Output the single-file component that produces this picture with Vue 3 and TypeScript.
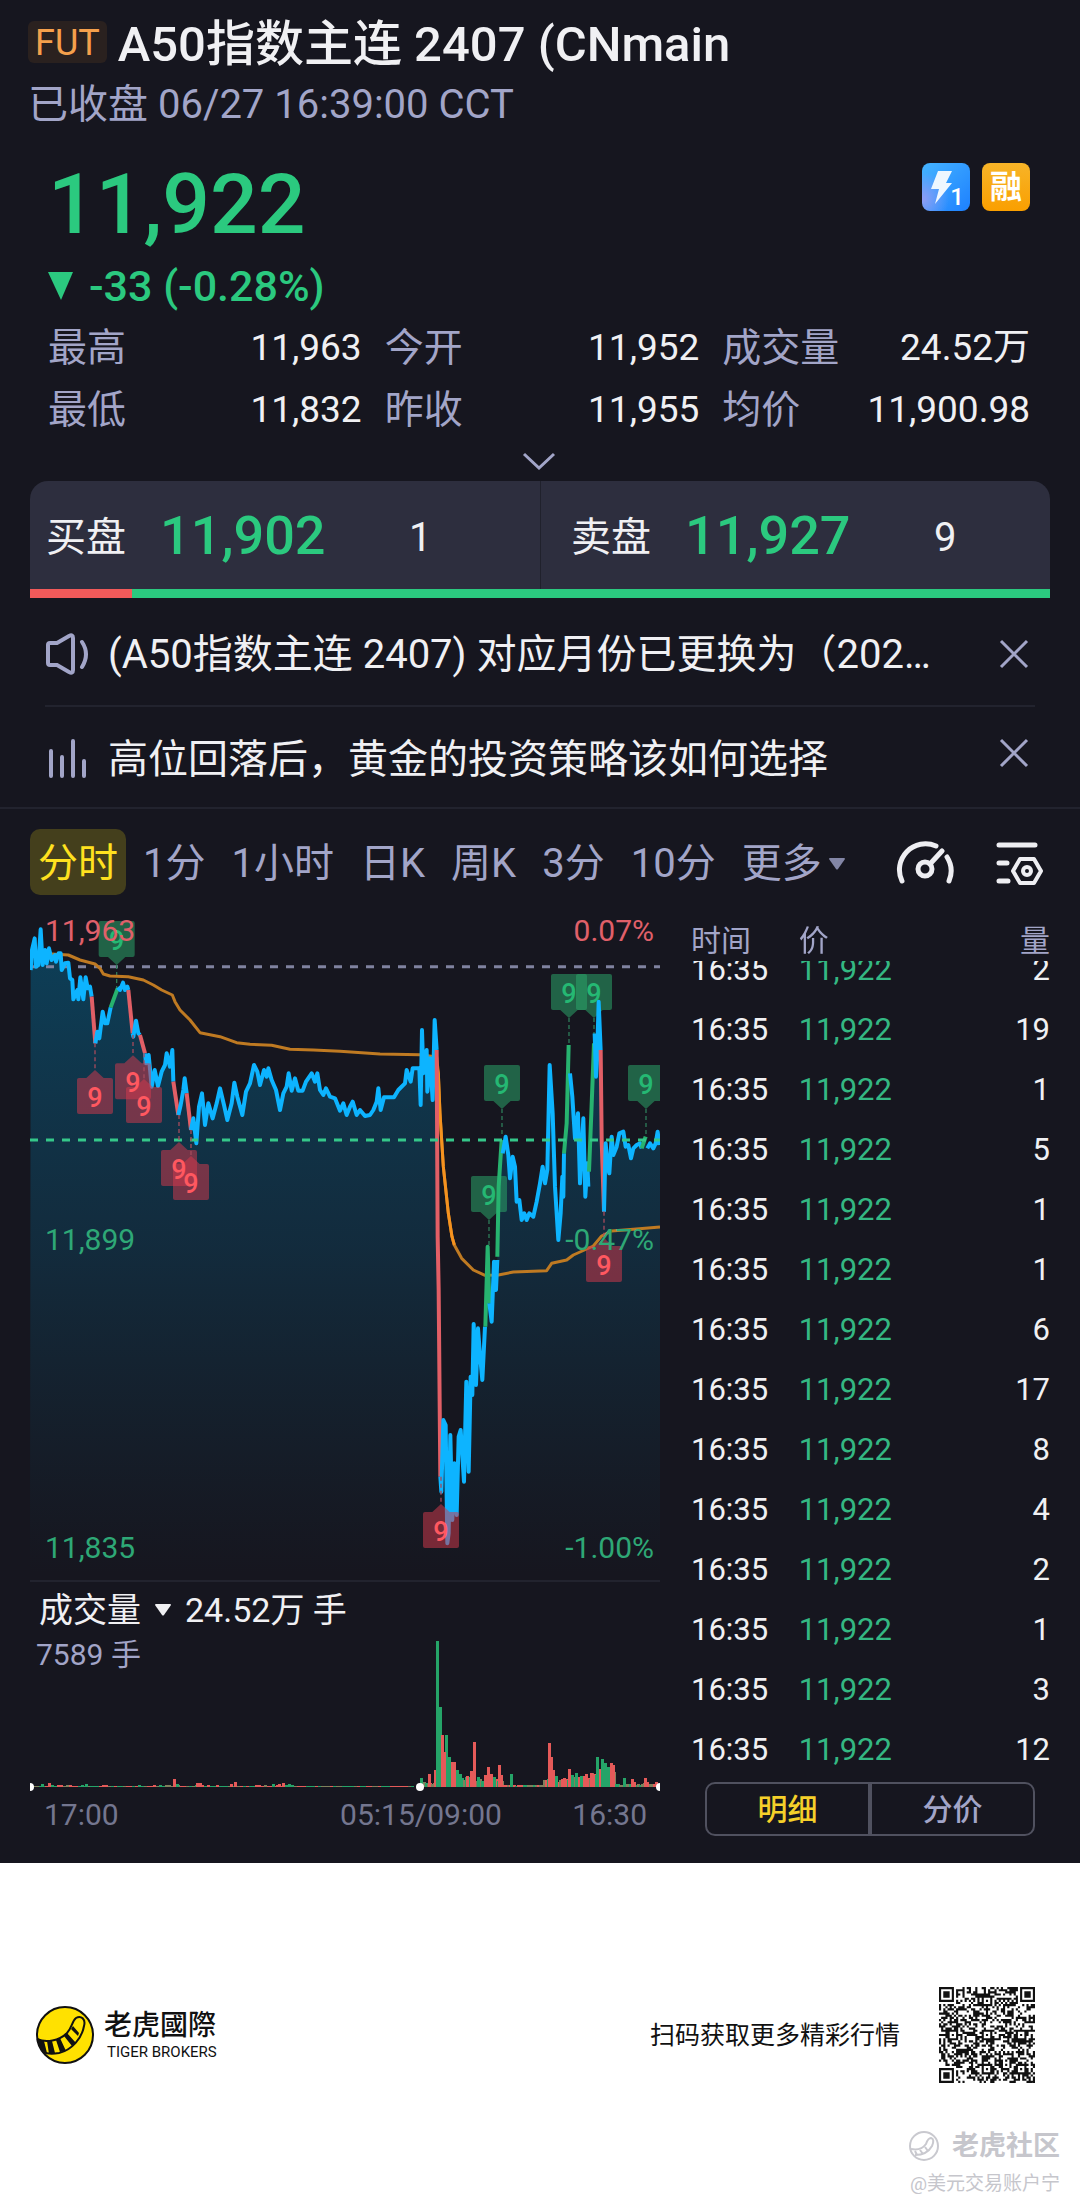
<script setup lang="ts">
import { onMounted, ref } from 'vue'

type Point = [number, number]
type Trend = 'up' | 'down'

interface Segment { kind: 'flat' | 'rise' | 'fall'; points: string }
interface Marker { x: number; top: number; trend: Trend; leadFrom: number; leadTo: number }
interface Bar { x: number; h: number; c: 'r' | 'g' | 'm' }

const stats = [
  { label: '最高', value: '11,963' },
  { label: '今开', value: '11,952' },
  { label: '成交量', value: '24.52万' },
  { label: '最低', value: '11,832' },
  { label: '昨收', value: '11,955' },
  { label: '均价', value: '11,900.98' },
]

const quotes = [
  { label: '买盘', price: '11,902', size: '1' },
  { label: '卖盘', price: '11,927', size: '9' },
]

const periods = ['分时', '1分', '1小时', '日K', '周K', '3分', '10分']
const activePeriod = ref('分时')

const ticks = [2, 19, 1, 5, 1, 1, 6, 17, 8, 4, 2, 1, 3, 12]
const tickView = ref('明细')
const tickScroller = ref<HTMLElement | null>(null)

onMounted(() => {
  if (tickScroller.value) tickScroller.value.scrollTop = tickScroller.value.scrollHeight
})

// Price series, three plot units to one screen pixel.
const segments: Segment[] = [
  { kind: 'flat', points: '32,210 36,150 44,115 48,200 55,195 62,88 68,195 75,150 80,190 87,145 95,180 105,165 108,185 116,160 122,160 125,210 135,190 145,188 150,235 157,240 160,298 172,270 175,298 181,232 190,298 197,232 203,265 210,260 215,290' },
  { kind: 'fall', points: '215,290 226,430' },
  { kind: 'flat', points: '226,430 232,395 238,415 248,335 255,370 262,370 272,322' },
  { kind: 'rise', points: '272,322 293,265' },
  { kind: 'flat', points: '293,262 300,270 309,248 315,270 322,260 325,270' },
  { kind: 'fall', points: '325,270 338,400' },
  { kind: 'flat', points: '338,400 340,410 348,362 355,400 360,405' },
  { kind: 'fall', points: '360,405 375,460' },
  { kind: 'flat', points: '375,460 378,490 386,465 395,560 404,510 414,558 425,515 435,495 440,460 450,500 457,450 460,545' },
  { kind: 'fall', points: '460,545 475,645' },
  { kind: 'flat', points: '475,645 482,615 490,570 494,535 500,580' },
  { kind: 'fall', points: '500,580 513,690' },
  { kind: 'flat', points: '513,690 520,655 529,730 537,620 546,580 555,675 565,610 578,655 590,610 600,565 612,615 622,660 635,610 643,548 652,590 667,645 678,575 690,550 702,495 712,515 720,555 732,510 740,530 745,505 755,540 768,570 780,630 790,580 800,560 806,520 815,572 825,535 835,572 848,572 858,545 875,520 885,545 892,520 900,570 910,585 918,565 930,590 945,595 960,632 970,610 980,645 990,620 998,605 1010,645 1020,630 1035,648 1050,645 1060,630 1070,605 1075,565 1082,630 1092,592 1122,592 1135,570 1155,550 1160,510 1172,545 1178,505 1190,505 1198,505 1202,615 1206,390 1210,520 1220,450 1222,575 1230,475 1238,600 1244,360 1250,450' },
  { kind: 'fall', points: '1250,450 1253,1010 1256,1170 1261,1730' },
  { kind: 'flat', points: '1261,1730 1264,1775 1270,1560 1277,1575 1282,1930 1286,1900 1291,1605 1297,1860 1303,1690 1310,1845 1316,1610 1322,1590 1332,1745 1339,1445 1346,1715 1352,1430 1357,1485 1361,1272 1368,1455 1374,1285 1380,1365 1387,1440 1395,1280' },
  { kind: 'rise', points: '1396,1280 1403,1040 1408,1210' },
  { kind: 'flat', points: '1408,1210 1415,1265 1422,1085 1428,1170 1432,1080' },
  { kind: 'rise', points: '1432,1070 1436,860 1445,720' },
  { kind: 'flat', points: '1448,760 1457,710 1465,765 1470,835 1478,770 1485,800 1490,905 1498,900 1505,960 1513,940 1520,960 1528,940 1540,950 1550,905 1560,850 1568,800 1575,850 1582,810 1589,495 1598,640 1605,860 1615,1020 1622,940 1627,830 1630,890 1632,760' },
  { kind: 'rise', points: '1632,760 1640,670 1646,435' },
  { kind: 'flat', points: '1650,520 1657,590 1665,715 1674,640 1680,850 1690,655 1696,890 1702,790 1705,860' },
  { kind: 'rise', points: '1707,815 1714,640 1722,430' },
  { kind: 'flat', points: '1724,400 1728,530 1731,480 1736,305 1742,450' },
  { kind: 'fall', points: '1742,450 1745,720 1752,935' },
  { kind: 'flat', points: '1752,935 1757,730 1763,800 1768,820 1775,710 1780,765 1790,740 1798,700 1810,695 1817,740 1825,735 1833,775 1840,745 1850,735 1860,730 1865,745' },
  { kind: 'rise', points: '1865,745 1877,710' },
  { kind: 'flat', points: '1882,745 1890,730 1900,745 1907,730 1913,695 1918,735' },
]
const area = `30,2020 ${segments.map((s) => s.points).join(' ')} 1920,735 1920,2020`

const average =
  '95,162 145,165 180,180 225,192 240,205 250,222 270,228 325,230 370,240 400,255 425,270 457,285 465,305 480,330 510,360 540,398 600,410 650,428 690,433 755,436 810,448 880,450 960,454 1080,462 1200,464 1245,470 1255,520 1260,640 1270,800 1285,940 1296,1010 1303,1035 1325,1075 1360,1110 1395,1126 1435,1125 1480,1116 1580,1112 1595,1090 1640,1080 1660,1065 1720,1038 1745,1008 1775,993 1840,988 1920,981'

const markers: Marker[] = [
  { x: 290, top: 63, trend: 'up', leadFrom: 195, leadTo: 265 },
  { x: 1446, top: 495, trend: 'up', leadFrom: 627, leadTo: 710 },
  { x: 1407, top: 828, trend: 'up', leadFrom: 960, leadTo: 1040 },
  { x: 1647, top: 222, trend: 'up', leadFrom: 354, leadTo: 435 },
  { x: 1722, top: 222, trend: 'up', leadFrom: 354, leadTo: 435 },
  { x: 1878, top: 495, trend: 'up', leadFrom: 627, leadTo: 710 },
  { x: 225, top: 534, trend: 'down', leadFrom: 430, leadTo: 510 },
  { x: 339, top: 490, trend: 'down', leadFrom: 405, leadTo: 466 },
  { x: 372, top: 561, trend: 'down', leadFrom: 460, leadTo: 537 },
  { x: 477, top: 750, trend: 'down', leadFrom: 645, leadTo: 726 },
  { x: 513, top: 792, trend: 'down', leadFrom: 690, leadTo: 768 },
  { x: 1263, top: 1836, trend: 'down', leadFrom: 1730, leadTo: 1812 },
  { x: 1752, top: 1038, trend: 'down', leadFrom: 935, leadTo: 1014 },
]
const upMarkers = markers.filter((m) => m.trend === 'up')
const downMarkers = markers.filter((m) => m.trend === 'down')

function markerShape(m: Marker): string {
  const l = m.x - 54
  const r = m.x + 54
  const t = m.top
  const b = m.top + 108
  return m.trend === 'up'
    ? `M${l + 6} ${t}H${r - 6}Q${r} ${t} ${r} ${t + 6}V${b - 6}Q${r} ${b} ${r - 6} ${b}H${m.x + 26}L${m.x} ${b + 24}L${m.x - 26} ${b}H${l + 6}Q${l} ${b} ${l} ${b - 6}V${t + 6}Q${l} ${t} ${l + 6} ${t}Z`
    : `M${l + 6} ${t}H${m.x - 26}L${m.x} ${t - 24}L${m.x + 26} ${t}H${r - 6}Q${r} ${t} ${r} ${t + 6}V${b - 6}Q${r} ${b} ${r - 6} ${b}H${l + 6}Q${l} ${b} ${l} ${b - 6}V${t + 6}Q${l} ${t} ${l + 6} ${t}Z`
}

function sequence(seed: number): () => number {
  let s = seed
  return () => {
    s = (s * 1103515245 + 12345) % 2147483648
    return s / 2147483648
  }
}

// Traded volume: quiet overnight session, then the named day-session bars.
const next = sequence(7)
const quiet: Bar[] = Array.from({ length: 128 }, (_, i): Bar => ({
  x: i * 3,
  h: i > 90 ? 1 : 1 + Math.floor(next() * 1.5),
  c: next() < 0.4 ? 'r' : next() < 0.6 ? 'g' : 'm',
}))
const busy: Bar[] = Array.from({ length: 116 }, (_, i): Bar => {
  const x = 393 + i * 2
  let h = 3
  if (x < 404) h = 4
  else if (x < 412) h = 22
  else if (x < 424) h = 22 - (x - 412)
  else if (x < 472) h = 8
  else if (x < 512) h = 2
  else if (x < 532) h = 7
  else if (x < 560) h = 9
  else if (x < 584) h = 14
  return { x, h: Math.max(1, Math.round(h * (0.7 + next() * 0.5))), c: next() < 0.35 ? 'r' : next() < 0.4 ? 'g' : 'm' }
})
const named: [number, number, Bar['c']][] = [
  [11, 3, 'g'], [18, 4, 'r'], [55, 3, 'g'], [72, 2, 'r'], [143, 8, 'r'], [146, 3, 'g'], [166, 4, 'r'], [169, 4, 'r'], [200, 3, 'r'], [204, 5, 'r'],
  [242, 3, 'g'], [248, 3, 'r'], [252, 4, 'r'], [258, 3, 'g'], [390, 9, 'g'], [398, 13, 'r'], [404, 17, 'r'], [409, 80, 'g'], [411, 52, 'r'], [406, 146, 'g'],
  [415, 52, 'g'], [413, 35, 'r'], [418, 30, 'g'], [421, 25, 'r'], [423, 25, 'r'], [426, 17, 'g'], [429, 13, 'g'], [436, 11, 'r'],
  [440, 16, 'r'], [443, 45, 'r'], [447, 10, 'g'], [454, 12, 'r'], [457, 20, 'r'], [460, 13, 'r'], [463, 10, 'g'], [468, 22, 'r'],
  [470, 12, 'r'], [480, 13, 'g'], [520, 30, 'r'], [518, 44, 'r'], [522, 17, 'r'], [525, 11, 'g'], [533, 9, 'r'], [538, 18, 'r'],
  [541, 12, 'g'], [545, 14, 'g'], [550, 11, 'g'], [555, 13, 'r'], [560, 14, 'r'], [566, 30, 'g'], [569, 18, 'r'], [571, 28, 'g'],
  [574, 24, 'g'], [577, 20, 'g'], [580, 24, 'r'], [582, 22, 'r'], [593, 9, 'g'], [601, 8, 'r'], [603, 5, 'r'], [614, 9, 'r'],
  [616, 5, 'r'], [625, 5, 'r'],
]
const bars: Bar[] = [...quiet, ...busy, ...named.map(([x, h, c]): Bar => ({ x, h, c }))]

// 45-module code with finder, alignment and timing patterns.
const SIZE = 45
function qrPath(): string {
  const rnd = sequence(2407)
  const ring = (x: number, y: number, c: Point, half: number): number | null => {
    const d = Math.max(Math.abs(x - c[0]), Math.abs(y - c[1]))
    return d <= half ? d : null
  }
  const finders: Point[] = [[3, 3], [SIZE - 4, 3], [3, SIZE - 4]]
  const aligns: Point[] = [[22, 6], [6, 22], [22, 22], [38, 22], [22, 38], [38, 38]]
  let d = ''
  for (let y = 0; y < SIZE; y++) {
    for (let x = 0; x < SIZE; x++) {
      let on = rnd() < 0.5
      if (x === 6) on = y % 2 === 0
      if (y === 6) on = x % 2 === 0
      for (const c of aligns) {
        const r = ring(x, y, c, 2)
        if (r !== null) on = r !== 1
      }
      for (const c of finders) {
        const r = ring(x, y, c, 4)
        if (r !== null) on = r !== 4 && r !== 2
      }
      if (on) d += `M${x} ${y}h1v1h-1z`
    }
  }
  return d
}
const qr = qrPath()
</script>

<template>
  <div class="page">
    <main class="quote">
      <header class="head">
        <div class="title-row">
          <span class="fut">FUT</span>
          <h1>A50指数主连 2407 (CNmain</h1>
        </div>
        <p class="status">已收盘 06/27 16:39:00 CCT</p>
      </header>

      <section class="summary">
        <div class="price-row">
          <strong class="price">11,922</strong>
          <div class="badges">
            <span class="badge badge-blue">
              <svg viewBox="0 0 48 48" width="48" height="48" aria-hidden="true">
                <path d="M16 8H30L24 20H30L13 41L17 26H9Z" fill="#eef7ff" />
              </svg>
              <b>1</b>
            </span>
            <span class="badge badge-gold">融</span>
          </div>
        </div>
        <p class="change">
          <svg viewBox="0 0 25 28" width="25" height="28" aria-hidden="true"><path d="M0 0H25L13 28Z" fill="currentColor" /></svg>
          <span>-33 (-0.28%)</span>
        </p>
        <dl class="stats">
          <div v-for="s in stats" :key="s.label">
            <dt>{{ s.label }}</dt>
            <dd>{{ s.value }}</dd>
          </div>
        </dl>
        <button class="expand" type="button" aria-label="展开">
          <svg viewBox="0 0 34 18" width="34" height="18"><path d="M2 2L17 16L32 2" fill="none" stroke="currentColor" stroke-width="3" /></svg>
        </button>
      </section>

      <section class="book">
        <div v-for="q in quotes" :key="q.label" class="side">
          <span class="side-label">{{ q.label }}</span>
          <span class="side-price">{{ q.price }}</span>
          <span class="side-size">{{ q.size }}</span>
        </div>
        <div class="ratio"><i></i></div>
      </section>

      <section class="notices">
        <div class="notice">
          <svg class="notice-icon" viewBox="0 0 44 42" width="44" height="42" aria-hidden="true">
            <path d="M3 12Q3 10 5 10H12L24 3Q28 1 28 5V37Q28 41 24 39L12 32H5Q3 32 3 30Z M37 9Q45 21 37 34" fill="none" stroke="currentColor" stroke-width="4" stroke-linecap="round" />
          </svg>
          <p>(A50指数主连 2407) 对应月份已更换为（202…</p>
          <button class="close" type="button" aria-label="关闭">
            <svg viewBox="0 0 30 30" width="30" height="30"><path d="M2 2L28 28M28 2L2 28" fill="none" stroke="currentColor" stroke-width="3" /></svg>
          </button>
        </div>
        <div class="notice news">
          <svg class="notice-icon" viewBox="0 0 44 42" width="44" height="42" aria-hidden="true">
            <path d="M6 13V38M17 19V38M28 3V38M39 23V38" fill="none" stroke="currentColor" stroke-width="4" stroke-linecap="round" />
          </svg>
          <p>高位回落后，黄金的投资策略该如何选择</p>
          <button class="close" type="button" aria-label="关闭">
            <svg viewBox="0 0 30 30" width="30" height="30"><path d="M2 2L28 28M28 2L2 28" fill="none" stroke="currentColor" stroke-width="3" /></svg>
          </button>
        </div>
      </section>

      <nav class="periods">
        <div class="period-list">
          <button v-for="p in periods" :key="p" type="button" :class="{ active: p === activePeriod }" @click="activePeriod = p">{{ p }}</button>
          <button type="button">更多<svg class="more" viewBox="0 0 18 12" width="18" height="12" aria-hidden="true"><path d="M1 1Q1 0 2 0H16Q17 0 17 1L10 11Q9 12 8 11Z" fill="#8386a6" /></svg></button>
        </div>
        <button class="tool" type="button" aria-label="指标">
          <svg viewBox="0 0 60 48" width="60" height="48">
            <g fill="none" stroke="#eeeef2" stroke-width="5" stroke-linecap="round">
              <path d="M7 43A26 26 0 0 1 41 8M52 19A26 26 0 0 1 54 43M35 26L47 13" />
              <circle cx="30" cy="31" r="7" />
            </g>
          </svg>
        </button>
        <button class="tool" type="button" aria-label="设置">
          <svg viewBox="0 0 50 48" width="50" height="48">
            <g fill="none" stroke="#eeeef2" stroke-width="5" stroke-linecap="round">
              <path d="M4 7H40M4 25H12M4 43H13" />
              <path d="M25 21H39L46 33L39 45H25L18 33Z" stroke-width="4" stroke-linejoin="round" />
              <circle cx="32" cy="33" r="4" stroke-width="4" />
            </g>
          </svg>
        </button>
      </nav>

      <div class="market">
        <section class="charts">
          <svg class="plot" viewBox="0 0 630 670" role="img" aria-label="分时">
            <defs>
              <linearGradient id="fade" x1="0" y1="0" x2="0" y2="1">
                <stop offset="0" stop-color="#0b4763" stop-opacity="0.85" />
                <stop offset="0.5" stop-color="#0f405a" stop-opacity="0.5" />
                <stop offset="1" stop-color="#12384c" stop-opacity="0" />
              </linearGradient>
            </defs>
            <g transform="translate(-10 -10) scale(0.33333)" fill="none">
              <polygon :points="area" fill="url(#fade)" />
              <path d="M30 200H1920" stroke="#8083a0" stroke-width="9" stroke-dasharray="24 24" />
              <g v-for="m in upMarkers" :key="m.x">
                <path :d="`M${m.x} ${m.leadFrom}V${m.leadTo}`" stroke="#2d7a58" stroke-width="4" stroke-dasharray="12 9" />
                <path :d="markerShape(m)" fill="#2ba468" fill-opacity="0.55" />
              </g>
            </g>
            <g class="nine nine-up">
              <text v-for="m in upMarkers" :key="m.x" :x="m.x / 3 - 10" :y="m.top / 3 + 19">9</text>
            </g>
            <g transform="translate(-10 -10) scale(0.33333)" fill="none" stroke-linejoin="round">
              <polyline :points="average" stroke="#bf7a22" stroke-width="9" />
              <path d="M1250 470L1255 520L1260 640L1270 800L1285 940L1296 1010L1303 1035" stroke="#f5921f" stroke-width="9" />
              <polyline v-for="(s, i) in segments" :key="i" :points="s.points" :class="s.kind" />
              <path d="M30 720H1920" stroke="#35c78a" stroke-width="9" stroke-dasharray="24 24" />
              <g v-for="m in downMarkers" :key="m.x">
                <path :d="`M${m.x} ${m.leadFrom}V${m.leadTo}`" stroke="#a34a5c" stroke-width="4" stroke-dasharray="12 9" />
                <path :d="markerShape(m)" fill="#d23a4c" fill-opacity="0.52" />
              </g>
            </g>
            <g class="nine nine-down">
              <text v-for="m in downMarkers" :key="m.x" :x="m.x / 3 - 10" :y="m.top / 3 + 19">9</text>
            </g>
            <g class="scale">
              <text class="red" x="15" y="31">11,963</text>
              <text x="15" y="340">11,899</text>
              <text x="15" y="648">11,835</text>
              <text class="red end" x="624" y="31">0.07%</text>
              <text class="end" x="624" y="340">-0.47%</text>
              <text class="end" x="624" y="648">-1.00%</text>
            </g>
          </svg>

          <button class="volume-head" type="button">
            <span>成交量</span>
            <svg viewBox="0 0 18 12" width="18" height="12" aria-hidden="true"><path d="M1 1Q1 0 2 0H16Q17 0 17 1L10 11Q9 12 8 11Z" fill="currentColor" /></svg>
            <span>24.52万 手</span>
          </button>
          <svg class="plot" viewBox="0 0 630 197" role="img" aria-label="成交量">
            <g shape-rendering="crispEdges">
              <rect v-for="(b, i) in bars" :key="i" :x="b.x" :y="149 - b.h" width="3" :height="b.h" :class="`bar-${b.c}`" />
            </g>
            <g fill="#fff">
              <circle cx="0" cy="149" r="4" />
              <circle cx="390" cy="149" r="4" />
              <circle cx="630" cy="149" r="4" />
            </g>
            <text class="peak" x="6" y="27">7589 手</text>
            <g class="times">
              <text x="14" y="187">17:00</text>
              <text class="mid" x="391" y="187">05:15/09:00</text>
              <text class="end" x="617" y="187">16:30</text>
            </g>
          </svg>
        </section>

        <section class="ticks">
          <div ref="tickScroller" class="tick-scroll">
            <table>
              <thead>
                <tr><th>时间</th><th>价</th><th>量</th></tr>
              </thead>
              <tbody>
                <tr v-for="(t, i) in ticks" :key="i"><td>16:35</td><td>11,922</td><td>{{ t }}</td></tr>
              </tbody>
            </table>
          </div>
          <div class="switch">
            <button type="button" :class="{ active: tickView === '明细' }" @click="tickView = '明细'">明细</button>
            <button type="button" :class="{ active: tickView === '分价' }" @click="tickView = '分价'">分价</button>
          </div>
        </section>
      </div>
    </main>

    <footer>
      <div class="brand-row">
        <svg class="logo" viewBox="0 0 58 58" width="58" height="58" aria-hidden="true">
          <circle cx="29" cy="29" r="28" fill="#ffe100" stroke="#111" stroke-width="2" />
          <path d="M1 33C10 37 23 35 31 27C36 22 36 15 40 12C45 9 50 13 48 20C46 32 36 44 23 47C17 48 11 48 7 46" fill="none" stroke="#111" stroke-width="2" />
          <path d="M1 32L8 35L11 47L6 45Q2 40 1 32ZM11 35L16 35L19 47L13 48ZM20 34L24 32L30 45L24 46ZM28 30L31 27L40 37L36 40ZM35 23L37 20L43 27L42 30Z" fill="#111" />
        </svg>
        <div class="brand">
          <strong>老虎國際</strong>
          <span>TIGER BROKERS</span>
        </div>
        <span class="scan">扫码获取更多精彩行情</span>
        <svg class="qr" viewBox="0 0 45 45" width="96" height="96" role="img" aria-label="二维码"><path :d="qr" fill="#111" /></svg>
      </div>
      <div class="community">
        <p class="community-name">
          <svg viewBox="0 0 32 32" width="32" height="32" aria-hidden="true">
            <circle cx="16" cy="16" r="14" fill="none" stroke="#c9c9cf" stroke-width="2" />
            <path d="M3 19Q13 21 18 14Q20 8 23 8Q27 9 24 16Q19 25 7 25" fill="none" stroke="#c9c9cf" stroke-width="2" />
            <path d="M7 21L9 25M12 20L15 24M17 17L20 21" stroke="#c9c9cf" stroke-width="2" />
          </svg>
          <span>老虎社区</span>
        </p>
        <p class="author">@美元交易账户宁</p>
      </div>
    </footer>
  </div>
</template>

<style>
body {
  margin: 0;
  background: #fff;
}
</style>

<style scoped>
.page {
  font-family: Roboto, 'Noto Sans CJK SC', sans-serif;
  color: #f0f0f3;
}
.page * {
  box-sizing: border-box;
}
h1, p, dl, dd {
  margin: 0;
}
button {
  padding: 0;
  border: 0;
  background: none;
  color: inherit;
  font: inherit;
}
svg {
  display: block;
  flex: none;
}
.quote {
  background: #16161f;
  padding-bottom: 27px;
}
.head {
  padding: 15px 27px 0 28px;
}
.title-row {
  display: flex;
  align-items: center;
  gap: 11px;
}
.fut {
  height: 42px;
  padding: 0 7px;
  margin-bottom: 6px;
  border-radius: 6px;
  background: #2a211f;
  color: #f5a04c;
  font-size: 36px;
  line-height: 44px;
}
h1 {
  font-size: 49px;
  font-weight: 500;
  line-height: 60px;
  white-space: nowrap;
}
.status {
  padding-top: 2px;
  color: #a2a5c8;
  font-size: 40px;
  line-height: 56px;
}
.summary {
  padding: 22px 50px 0 48px;
}
.price-row {
  display: flex;
  justify-content: space-between;
}
.price {
  color: #2bc97f;
  font-size: 84px;
  font-weight: 500;
  line-height: 100px;
}
.badges {
  display: flex;
  gap: 12px;
  padding-top: 8px;
}
.badge {
  position: relative;
  width: 48px;
  height: 48px;
  border-radius: 8px;
  color: #fff;
  font-weight: 700;
  text-align: center;
}
.badge-blue {
  background: radial-gradient(circle at 0 75%, #8f9cf5, transparent 45%), linear-gradient(135deg, #45b4ff, #1d80ff);
}
.badge-blue b {
  position: absolute;
  right: 6px;
  bottom: 2px;
  font-size: 24px;
  font-weight: 500;
  line-height: 24px;
}
.badge-gold {
  background: linear-gradient(180deg, #f7b428, #fa9f00);
  font-size: 32px;
  line-height: 48px;
}
.change {
  display: flex;
  align-items: center;
  gap: 16px;
  color: #2bc97f;
  font-size: 43px;
  font-weight: 500;
  line-height: 62px;
}
.stats {
  display: grid;
  grid-template-columns: 314fr 315fr 308fr;
  column-gap: 23px;
  font-size: 37px;
  line-height: 62px;
}
.stats div {
  display: flex;
  justify-content: space-between;
  white-space: nowrap;
}
.stats dt {
  color: #a2a5c8;
  font-size: 39px;
}
.expand {
  display: block;
  margin: 0 auto;
  padding: 11px 0;
  color: #a2a5c8;
}
.book {
  display: grid;
  grid-template-columns: 1fr 1fr;
  margin: 0 30px;
  border-radius: 18px 18px 0 0;
  background: #2d2e3e;
  overflow: hidden;
}
.side {
  display: grid;
  grid-template-columns: 114px 249px 1fr;
  align-items: center;
  height: 108px;
  padding: 2px 0 0 16px;
  font-size: 40px;
  line-height: 60px;
}
.side + .side {
  padding-left: 30px;
  border-left: 1px solid #20212c;
}
.side-label {
  padding-top: 4px;
}
.side-price {
  color: #2bc97f;
  font-size: 54px;
  font-weight: 500;
}
.side-size {
  padding-top: 3px;
}
.ratio {
  grid-column: 1 / -1;
  height: 9px;
  background: #2bc97f;
}
.ratio i {
  display: block;
  width: 10%;
  height: 9px;
  background: #f25a5a;
}
.notice {
  display: flex;
  align-items: center;
  height: 109px;
  margin: 0 45px;
  padding: 4px 6px 0 0;
  border-bottom: 2px solid #22232e;
  font-size: 40px;
  line-height: 60px;
}
.notice-icon {
  margin-right: 19px;
  color: #a2a5c8;
}
.notice p {
  flex: 1;
  min-width: 0;
  padding-top: 2px;
  overflow: hidden;
  text-overflow: ellipsis;
  white-space: nowrap;
}
.close {
  color: #a2a5c8;
}
.news {
  height: 102px;
  margin: 0;
  padding: 4px 51px 0 45px;
}
.news .close {
  margin-bottom: 12px;
}
.periods {
  display: flex;
  align-items: center;
  padding: 20px 35px 15px 30px;
  color: #a2a5c8;
  font-size: 40px;
  line-height: 60px;
}
.period-list {
  display: flex;
  flex: 1;
  gap: 26px;
  white-space: nowrap;
}
.period-list button {
  display: flex;
  align-items: center;
  padding-top: 4px;
  height: 66px;
}
.period-list .active {
  margin-right: -9px;
  padding: 4px 8px 0;
  border-radius: 10px;
  background: #443f1c;
  color: #ffe11f;
}
.more {
  margin-left: 6px;
}
.tool + .tool {
  margin-left: 40px;
}
.market {
  display: grid;
  grid-template-columns: 630fr 359fr;
  column-gap: 31px;
  padding: 0 30px;
}
.plot {
  width: 100%;
  height: auto;
  overflow: hidden;
}
.flat, .rise, .fall {
  stroke: #0db4ff;
  stroke-width: 12;
}
.rise {
  stroke: #27b36f;
}
.fall {
  stroke: #e25f66;
}
.nine {
  font-size: 27px;
  font-weight: 500;
  text-anchor: middle;
}
.nine-up {
  fill: #25b873;
}
.nine-down {
  fill: #ff5860;
}
.scale {
  fill: #2ea876;
  font-size: 30px;
}
.scale .red {
  fill: #e0606a;
}
.end {
  text-anchor: end;
}
.mid {
  text-anchor: middle;
}
.volume-head {
  display: flex;
  align-items: center;
  gap: 13px;
  width: 100%;
  height: 58px;
  padding-left: 9px;
  border-top: 2px solid #22232e;
  font-size: 34px;
  line-height: 56px;
}
.bar-r {
  fill: #e55a59;
}
.bar-g {
  fill: #25a468;
}
.bar-m {
  fill: #80805c;
}
.peak {
  fill: #a2a5c8;
  font-size: 30px;
}
.times {
  fill: #74768f;
  font-size: 30px;
}
.tick-scroll {
  height: 870px;
  overflow-y: auto;
  scrollbar-width: none;
}
table {
  width: 100%;
  border-collapse: collapse;
  table-layout: fixed;
}
th {
  position: sticky;
  top: 0;
  height: 51px;
  padding: 11px 0 0;
  background: #16161f;
  color: #a2a5c8;
  font-size: 30px;
  font-weight: 400;
  line-height: 40px;
  text-align: left;
}
th:first-child {
  width: 30%;
}
th:nth-child(2) {
  width: 40%;
}
td {
  height: 60px;
  padding: 0;
  font-size: 31px;
  line-height: 60px;
}
td:nth-child(2) {
  color: #34b883;
}
th:last-child, td:last-child {
  text-align: right;
}
.switch {
  display: flex;
  margin: 2px 15px 0 14px;
  border: 2px solid #50515f;
  border-radius: 10px;
}
.switch button {
  flex: 1;
  padding-top: 2px;
  color: #a2a5c8;
  font-size: 30px;
  font-weight: 500;
  line-height: 48px;
}
.switch button + button {
  border-left: 4px solid #50515f;
}
.switch .active {
  color: #f5d02a;
}
footer {
  padding: 124px 20px 10px 36px;
  color: #111;
}
.brand-row {
  display: flex;
  align-items: center;
  padding-right: 25px;
}
.brand {
  flex: 1;
  margin-left: 10px;
}
.brand strong {
  display: block;
  padding-top: 2px;
  font-size: 28px;
  font-weight: 500;
  line-height: 32px;
}
.brand span {
  display: block;
  margin-left: 3px;
  font-size: 15px;
  line-height: 20px;
}
.scan {
  margin-right: 39px;
  padding-top: 2px;
  font-size: 25px;
  line-height: 36px;
}
.community {
  padding-top: 45px;
  color: #c6c6cc;
}
.community-name {
  display: flex;
  align-items: center;
  justify-content: flex-end;
  gap: 12px;
  font-size: 27px;
  font-weight: 700;
  line-height: 36px;
}
.author {
  padding-top: 6px;
  font-size: 19px;
  line-height: 28px;
  text-align: right;
}
</style>
